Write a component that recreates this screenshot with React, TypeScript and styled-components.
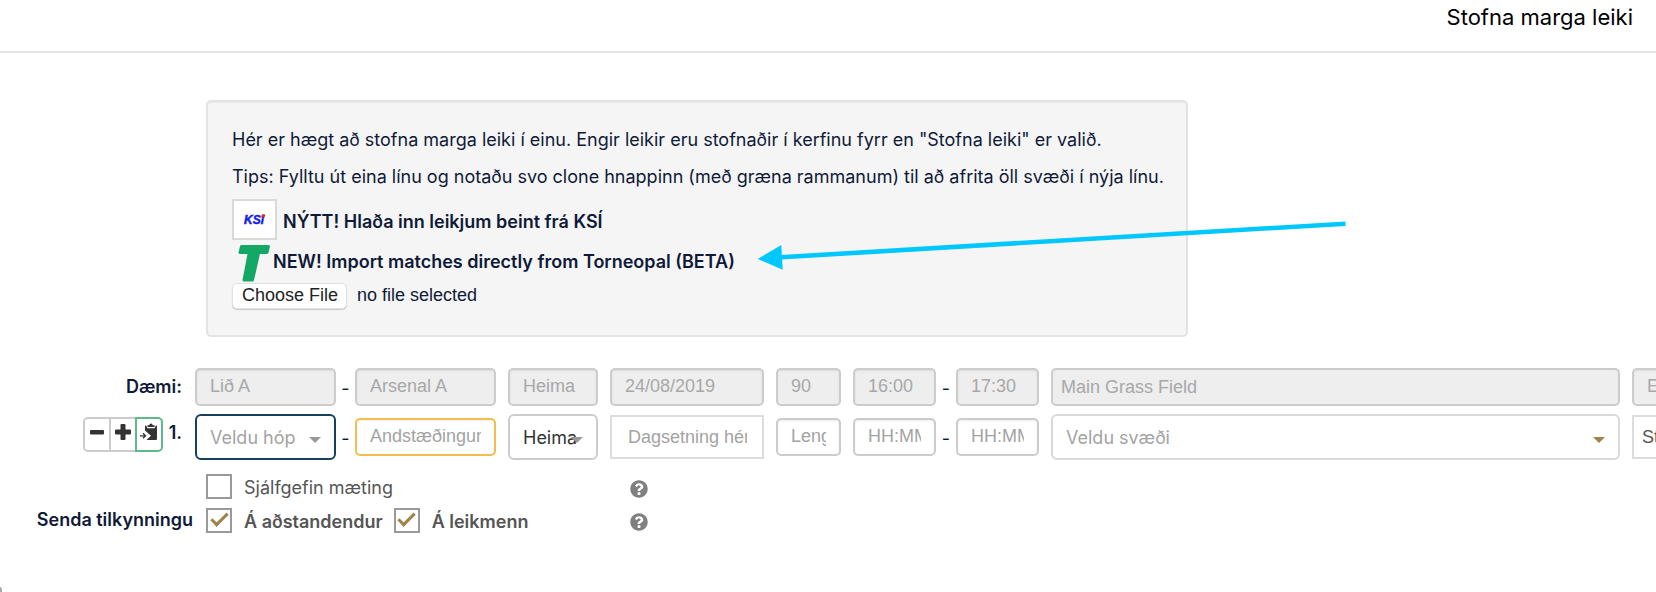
import React from "react";
import styled, { createGlobalStyle, css } from "styled-components";
import { FaQuestionCircle } from "react-icons/fa";

const brand = '"Inter", "Helvetica Neue", sans-serif';
const system = '"Liberation Sans", Arial, sans-serif';
const navy = "#0f1a38";
const gold = "#a1834a";

const GlobalStyle = createGlobalStyle`
  *, *::before, *::after { box-sizing: border-box; }
  body {
    margin: 0;
    background: #fff;
    color: ${navy};
    font: 400 18px/26px ${brand};
  }
  button, input, select { margin: 0; }
`;

const Page = styled.div`
  position: relative;
  min-height: 100vh;
  overflow: hidden;

  &::after {
    content: "";
    position: absolute;
    left: 0;
    bottom: 0;
    width: 2px;
    height: 5px;
    border-top-right-radius: 100%;
    background: #a5a5a5;
  }
`;

const Header = styled.header`
  display: flex;
  justify-content: flex-end;
  height: 53px;
  padding-right: 23px;
  border-bottom: 2px solid #e5e5e5;
`;

const Title = styled.h1`
  margin: 0;
  color: #000;
  font-size: 22px;
  font-weight: 400;
  line-height: 34px;
`;

const Panel = styled.section`
  position: relative;
  max-width: 982px;
  margin: 47px 24px 31px 206px;
  padding: 19px 20px 26px 24px;
  border: 2px solid #e3e3e3;
  border-radius: 5px;
  background: #f5f5f5;
  box-shadow: inset 0 1px 1px rgba(0, 0, 0, 0.05);
`;

const Note = styled.p`
  margin: 0;
  line-height: 37px;
`;

const ImportLink = styled.a<{ $gap: number }>`
  display: flex;
  align-items: center;
  gap: ${(p) => p.$gap}px;
  width: fit-content;
  color: ${navy};
  font-weight: 600;
  text-decoration: none;
`;

const KsiLink = styled(ImportLink)`
  align-items: flex-end;
  margin-top: 4px;
  line-height: 36px;
`;

const KsiBadge = styled.span`
  display: flex;
  align-items: center;
  justify-content: center;
  width: 45px;
  height: 41px;
  border: 2px solid #d9d9d9;
  background: #fff;
`;

const TorneopalMark = styled.svg`
  width: 39px;
  height: 43px;
`;

const FilePicker = styled.label`
  display: flex;
  align-items: center;
  gap: 10px;
  width: fit-content;
  font: 400 18px/22px ${system};
`;

const HiddenFile = styled.input`
  position: absolute;
  width: 1px;
  height: 1px;
  opacity: 0;
`;

const FileButton = styled.span`
  padding: 0 8px 0 9px;
  height: 26px;
  border: 1px solid #e2e2e2;
  border-radius: 5px;
  background: #fff;
  box-shadow: 0 1px 1px rgba(0, 0, 0, 0.18);
  color: #222;
`;

const FileStatus = styled.span`
  padding-bottom: 3px;
`;

const Pointer = styled.svg`
  position: absolute;
  left: 549px;
  top: 118px;
  width: 592px;
  height: 52px;
  pointer-events: none;
`;

const Form = styled.form`
  display: flex;
  flex-direction: column;
  gap: 8px;
`;

const MatchRow = styled.div`
  display: grid;
  grid-template-columns: 183px 301px 90px 154px 65px 186px 569px 150px;
  column-gap: 12px;
  align-items: center;
`;

const RowHead = styled.div`
  display: flex;
  justify-content: flex-end;
  align-items: center;
  gap: 6px;
  padding-right: 1px;
  font-weight: 600;
`;

const NumberedHead = styled(RowHead)`
  padding-bottom: 5px;
  line-height: 18px;

  span { padding-bottom: 4px; }
`;

const Pair = styled.div<{ $dash: number }>`
  display: grid;
  grid-template-columns: 1fr ${(p) => p.$dash}px 1fr;
  align-items: center;
  text-align: center;
`;

const Dash = styled.span`
  padding-top: 3px;
`;

const Field = styled.input<{ $accent?: string }>`
  display: block;
  width: 100%;
  min-width: 0;
  height: 38px;
  padding: 0 13px 2px;
  border: 2px solid ${(p) => p.$accent ?? "#ccc"};
  border-radius: 5px;
  background: #fff;
  box-shadow: inset 0 1px 2px rgba(0, 0, 0, 0.08);
  color: #555;
  font: 400 18px ${system};

  &::placeholder { color: #a3a3a3; opacity: 1; }
  &:disabled { background: #eee; color: #a8a8a8; }
`;

const WideField = styled(Field)`
  padding: 0 8px;
  box-shadow: none;
`;

const SquareField = styled(Field)<{ $inset: number }>`
  height: 44px;
  padding: 0 15px 0 ${(p) => p.$inset}px;
  border-color: #ddd;
  border-radius: 0;
  box-shadow: none;
`;

const SelectBox = styled.div<{ $arrow?: string }>`
  position: relative;

  &::after {
    content: "";
    position: absolute;
    right: 15px;
    top: 23px;
    border: 6px solid transparent;
    border-top-color: ${(p) => p.$arrow ?? "#999"};
    border-bottom: 0;
    pointer-events: none;
  }
`;

const Select = styled.select<{ $border?: string; $filled?: boolean }>`
  appearance: none;
  display: block;
  width: 100%;
  height: 46px;
  padding: 0 2px 0 13px;
  border: 2px solid ${(p) => p.$border ?? "#ccc"};
  border-radius: 6px;
  background: #fff;
  color: ${(p) => (p.$filled ? "#333" : "#a3a3a3")};
  font: 400 18px ${brand};
`;

const ButtonGroup = styled.div`
  display: flex;
`;

const RowButton = styled.button<{ $green?: boolean }>`
  display: flex;
  align-items: center;
  justify-content: center;
  width: 28px;
  height: 35px;
  margin-left: -2px;
  padding: 0 0 5px;
  border: 2px solid #ccc;
  background: #fff;

  &:first-child { border-radius: 5px 0 0 5px; }
  &:last-child { border-radius: 0 5px 5px 0; }
  ${(p) => p.$green && css`
    z-index: 1;
    border-color: #5bb98c;
  `}

  svg { flex: none; }
`;

const Options = styled.div`
  display: flex;
  flex-direction: column;
  gap: 8px;
  margin-top: 6px;
`;

const OptionRow = styled.div`
  display: grid;
  grid-template-columns: 193px 411px 18px;
  column-gap: 13px;
  align-items: center;
  height: 25px;
`;

const OptionTitle = styled.span`
  text-align: right;
  font-weight: 600;
`;

const Checks = styled.div`
  grid-column: 2;
  display: flex;
  gap: 11px;
`;

const CheckLabel = styled.label<{ $strong?: boolean }>`
  display: flex;
  gap: 12px;
  height: 25px;
  color: #555;
  font-weight: ${(p) => (p.$strong ? 600 : 400)};
  line-height: 27px;
  white-space: nowrap;
`;

const Checkbox = styled.input`
  appearance: none;
  display: grid;
  place-items: center;
  width: 26px;
  height: 25px;
  border: 2px solid #999;
  background: #fff;

  &:checked::before {
    content: "";
    width: 17px;
    height: 9px;
    margin-bottom: 5px;
    border: solid ${gold};
    border-width: 0 0 3px 3px;
    transform: rotate(-45deg);
  }
`;

const Help = styled.button`
  display: flex;
  margin-top: 4px;
  padding: 0;
  border: 0;
  background: none;
  color: #808080;
`;

const example = { disabled: true, readOnly: true };

function Check({ label, strong, on }: { label: string; strong?: boolean; on?: boolean }) {
  return (
    <CheckLabel $strong={strong}>
      <Checkbox type="checkbox" defaultChecked={on} />
      {label}
    </CheckLabel>
  );
}

function HelpButton() {
  return (
    <Help type="button" aria-label="Hjálp">
      <FaQuestionCircle size={18} />
    </Help>
  );
}

export default function App() {
  return (
    <Page>
      <GlobalStyle />
      <Header>
        <Title>Stofna marga leiki</Title>
      </Header>

      <Panel>
        <Note>
          Hér er hægt að stofna marga leiki í einu. Engir leikir eru stofnaðir í kerfinu fyrr en
          "Stofna leiki" er valið.
        </Note>
        <Note>
          Tips: Fylltu út eina línu og notaðu svo clone hnappinn (með græna rammanum) til að afrita
          öll svæði í nýja línu.
        </Note>
        <KsiLink href="#ksi" $gap={6}>
          <KsiBadge>
            <svg width="24" height="14" viewBox="0 0 24 14" aria-hidden="true">
              <text x="1" y="11" fontFamily="Liberation Sans" fontSize="12" fontWeight="700" fontStyle="italic" fill="#1522e0" stroke="#1522e0" strokeWidth="0.5">
                KSi
              </text>
              <path d="M18.8 1.6h3.4l-.7 2.6h-3.2z" fill="#f01818" />
            </svg>
          </KsiBadge>
          NÝTT! Hlaða inn leikjum beint frá KSÍ
        </KsiLink>
        <ImportLink href="#torneopal" $gap={2}>
          <TorneopalMark viewBox="0 0 39 43" aria-hidden="true">
            <g fill="#14a866" stroke="#14a866" strokeWidth="3" strokeLinejoin="round">
              <path d="M9.5 6.5H36.500L35 12.500H8z" />
              <path d="M18 9H27.500L20.500 40H12z" />
            </g>
          </TorneopalMark>
          NEW! Import matches directly from Torneopal (BETA)
        </ImportLink>
        <FilePicker>
          <HiddenFile type="file" />
          <FileButton>Choose File</FileButton>
          <FileStatus>no file selected</FileStatus>
        </FilePicker>
        <Pointer viewBox="0 0 592 52" aria-hidden="true">
          <path d="M20 37.500L588.500 3.700" stroke="#00c8ff" strokeWidth="4.600" />
          <path d="M.700 39L24.300 25L25.700 49.700z" fill="#00c8ff" />
        </Pointer>
      </Panel>

      <Form>
        <MatchRow>
          <RowHead>Dæmi:</RowHead>
          <Pair $dash={19}>
            <Field {...example} aria-label="Dæmi: lið" value="Lið A" />
            <Dash>-</Dash>
            <Field {...example} aria-label="Dæmi: andstæðingur" value="Arsenal A" />
          </Pair>
          <Field {...example} aria-label="Dæmi: heima eða úti" value="Heima" />
          <Field {...example} aria-label="Dæmi: dagsetning" value="24/08/2019" />
          <Field {...example} aria-label="Dæmi: lengd" value="90" />
          <Pair $dash={20}>
            <Field {...example} aria-label="Dæmi: byrjar" value="16:00" />
            <Dash>-</Dash>
            <Field {...example} aria-label="Dæmi: endar" value="17:30" />
          </Pair>
          <WideField {...example} aria-label="Dæmi: svæði" value="Main Grass Field" />
          <Field {...example} aria-label="Dæmi: annað" value="E" />
        </MatchRow>

        <MatchRow>
          <NumberedHead>
            <ButtonGroup>
              <RowButton type="button" aria-label="Fjarlægja línu">
                <svg width="14" height="16" viewBox="0 0 14 16">
                  <rect y="6" width="14" height="4.500" rx="1" fill="#333" />
                </svg>
              </RowButton>
              <RowButton type="button" aria-label="Bæta við línu">
                <svg width="16" height="16" viewBox="0 0 16 16">
                  <path d="M5.500 1a1 1 0 0 1 1-1h3a1 1 0 0 1 1 1v4.500H15a1 1 0 0 1 1 1v3a1 1 0 0 1-1 1h-4.500V15a1 1 0 0 1-1 1h-3a1 1 0 0 1-1-1v-4.500H1a1 1 0 0 1-1-1v-3a1 1 0 0 1 1-1h4.500z" fill="#333" />
                </svg>
              </RowButton>
              <RowButton type="button" $green aria-label="Afrita línu">
                <svg width="18" height="18" viewBox="0 0 18 18">
                  <path d="M5 3.500Q5 2.500 6 2.300L7.500 5.200H14.500L16 2.300Q17 2.500 17 3.500V16Q17 17 16 17H6.500L11 12.800L5 7.500z" fill="#333" />
                  <path d="M7.500 4V2.200H9.300Q9.500.5 11 .5T12.700 2.200H14.500V4z" fill="#333" />
                  <path d="M0 12.800H5M3 10.300L5.500 12.800L3 15.300" fill="none" stroke="#333" strokeWidth="1.300" />
                </svg>
              </RowButton>
            </ButtonGroup>
            <span>1.</span>
          </NumberedHead>
          <Pair $dash={19}>
            <SelectBox>
              <Select aria-label="Hópur" $border="#143f5e">
                <option>Veldu hóp</option>
              </Select>
            </SelectBox>
            <Dash>-</Dash>
            <Field aria-label="Andstæðingur" placeholder="Andstæðingur" $accent="#f3bd4f" />
          </Pair>
          <SelectBox>
            <Select aria-label="Heima eða úti" $filled>
              <option>Heima</option>
            </Select>
          </SelectBox>
          <SquareField aria-label="Dagsetning" placeholder="Dagsetning hér" $inset={16} />
          <Field aria-label="Lengd" placeholder="Lengd" />
          <Pair $dash={20}>
            <Field aria-label="Byrjar" placeholder="HH:MM" />
            <Dash>-</Dash>
            <Field aria-label="Endar" placeholder="HH:MM" />
          </Pair>
          <SelectBox $arrow={gold}>
            <Select aria-label="Svæði" $border="#d9d9d9">
              <option>Veldu svæði</option>
            </Select>
          </SelectBox>
          <SquareField aria-label="Annað" defaultValue="St" $inset={8} />
        </MatchRow>

        <Options>
          <OptionRow>
            <Checks>
              <Check label="Sjálfgefin mæting" />
            </Checks>
            <HelpButton />
          </OptionRow>
          <OptionRow>
            <OptionTitle>Senda tilkynningu</OptionTitle>
            <Checks>
              <Check label="Á aðstandendur" strong on />
              <Check label="Á leikmenn" strong on />
            </Checks>
            <HelpButton />
          </OptionRow>
        </Options>
      </Form>
    </Page>
  );
}
